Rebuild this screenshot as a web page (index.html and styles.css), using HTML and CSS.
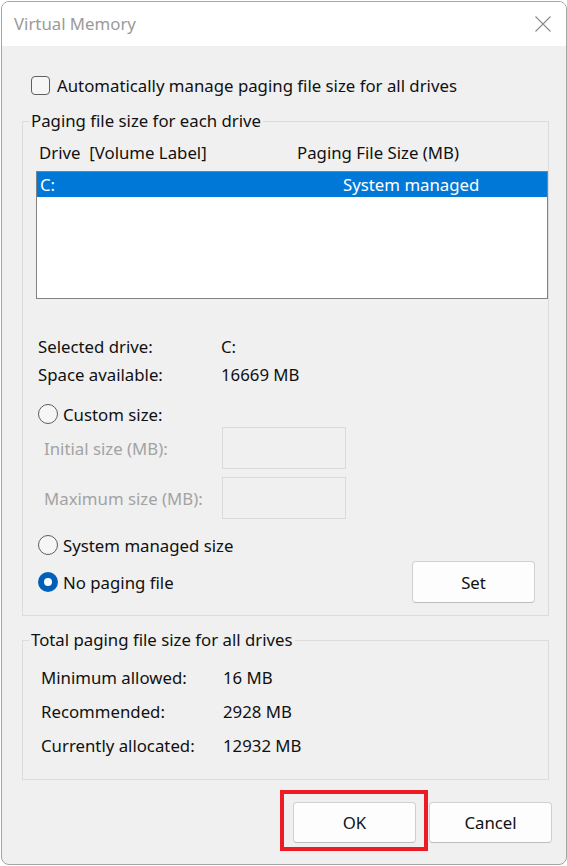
FILE: index.html
```html
<!DOCTYPE html>
<html lang="en">
<head>
    <meta charset="UTF-8">
    <meta name="viewport" content="width=device-width, initial-scale=1.0">
    <title>Virtual Memory</title>
    <link rel="stylesheet" href="styles.css">
</head>
<body>
    <div class="window">
        <div class="titlebar">
            <span class="title">Virtual Memory</span>
            <svg class="close" width="16" height="16" viewBox="0 0 16 16">
                <path d="M0.5 0.5 L15.5 15.5 M15.5 0.5 L0.5 15.5" stroke="#8a8a8a" stroke-width="1.1" fill="none"/>
            </svg>
        </div>

        <div class="content">
            <label class="check-row">
                <span class="checkbox"></span>
                <span>Automatically manage paging file size for all drives</span>
            </label>

            <fieldset class="group drives">
                <legend>Paging file size for each drive</legend>

                <div class="list-header">
                    <span class="pre">Drive  [Volume Label]</span>
                    <span>Paging File Size (MB)</span>
                </div>
                <div class="listbox">
                    <div class="list-row selected">
                        <span>C:</span>
                        <span>System managed</span>
                    </div>
                </div>

                <div class="info-row first">
                    <span>Selected drive:</span>
                    <span>C:</span>
                </div>
                <div class="info-row">
                    <span>Space available:</span>
                    <span>16669 MB</span>
                </div>

                <label class="radio-row custom">
                    <span class="radio"></span>
                    <span>Custom size:</span>
                </label>
                <div class="size-row first">
                    <span>Initial size (MB):</span>
                    <span class="textbox"></span>
                </div>
                <div class="size-row">
                    <span>Maximum size (MB):</span>
                    <span class="textbox"></span>
                </div>

                <label class="radio-row managed">
                    <span class="radio"></span>
                    <span>System managed size</span>
                </label>
                <div class="radio-row nopaging">
                    <label class="radio-label">
                        <span class="radio checked"></span>
                        <span>No paging file</span>
                    </label>
                    <button class="btn set">Set</button>
                </div>
            </fieldset>

            <fieldset class="group totals">
                <legend>Total paging file size for all drives</legend>
                <div class="total-row">
                    <span>Minimum allowed:</span>
                    <span>16 MB</span>
                </div>
                <div class="total-row">
                    <span>Recommended:</span>
                    <span>2928 MB</span>
                </div>
                <div class="total-row">
                    <span>Currently allocated:</span>
                    <span>12932 MB</span>
                </div>
            </fieldset>

            <div class="buttons">
                <span class="highlight"><button class="btn">OK</button></span>
                <button class="btn cancel">Cancel</button>
            </div>
        </div>
    </div>
</body>
</html>
```

FILE: styles.css
```css
body {
    margin: 0;
    background-color: #ffffff;
    font-family: "Noto Sans", "Open Sans", sans-serif;
    font-size: 16.8px;
    color: #111;
}
.window {
    box-sizing: border-box;
    margin: 1px;
    width: 566px;
    height: 864px;
    border: 1px solid #a5a5a5;
    border-radius: 8px;
    overflow: hidden;
    background-color: #f0f0f0;
    display: flex;
    flex-direction: column;
}
.titlebar {
    height: 44px;
    flex-shrink: 0;
    background-color: #ffffff;
    display: flex;
    align-items: center;
    justify-content: space-between;
    padding: 0 15px 0 12px;
}
.title {
    color: #9a9a9a;
    line-height: 24px;
}
.close {
    margin-top: -1px;
}
.content {
    padding: 0 14px 0 20px;
}
.check-row {
    display: flex;
    align-items: center;
    height: 24px;
    margin: 27px 0 0 9px;
}
.checkbox {
    box-sizing: border-box;
    width: 19px;
    height: 19px;
    border: 1px solid #606060;
    border-radius: 4px;
    background-color: #f6f6f6;
    margin-right: 7px;
}
.group {
    margin: 12px 3px 0 0;
    padding: 0;
    min-width: 0;
    border: 1px solid #dcdcdc;
}
.group legend {
    margin-left: 6px;
    padding: 0 2px;
    line-height: 24px;
}
.drives {
    padding-bottom: 12px;
}
.list-header {
    display: grid;
    grid-template-columns: 258px auto;
    line-height: 24px;
    margin-top: 8px;
    padding-left: 16px;
}
.pre {
    white-space: pre;
}
.listbox {
    box-sizing: border-box;
    height: 128px;
    margin: 6px 0 0 13px;
    border: 1px solid #828282;
    background-color: #ffffff;
}
.list-row {
    display: grid;
    grid-template-columns: 303px auto;
    height: 25px;
    line-height: 25px;
    padding-left: 3px;
}
.list-row.selected {
    background-color: #0078d7;
    color: #ffffff;
}
.info-row {
    display: grid;
    grid-template-columns: 183px auto;
    line-height: 24px;
    margin-top: 4px;
    padding-left: 15px;
}
.info-row.first {
    margin-top: 36px;
}
.radio-row {
    display: flex;
    align-items: center;
    height: 24px;
    padding-left: 15px;
}
.radio-row.custom {
    margin-top: 15px;
}
.radio-row.managed {
    margin-top: 14px;
}
.radio-row.nopaging {
    height: 42px;
    margin-top: 4px;
    justify-content: space-between;
    padding-right: 13px;
}
.radio-label {
    display: flex;
    align-items: center;
}
.radio {
    box-sizing: border-box;
    width: 20px;
    height: 20px;
    border: 1px solid #5e5e5e;
    border-radius: 50%;
    background-color: #f6f6f6;
    margin-right: 5px;
}
.radio.checked {
    border: 6px solid #005fb8;
    background-color: #ffffff;
}
.size-row {
    display: grid;
    grid-template-columns: 178px 124px;
    align-items: center;
    height: 42px;
    margin-top: 8px;
    padding-left: 21px;
    color: #a3a3a3;
}
.size-row.first {
    margin-top: 1px;
}
.textbox {
    box-sizing: border-box;
    height: 42px;
    border: 1px solid #dadada;
    background-color: #f0f0f0;
}
.btn {
    box-sizing: border-box;
    width: 123px;
    height: 41px;
    border: 1px solid #d0d0d0;
    border-bottom-color: #bdbdbd;
    border-radius: 4px;
    background-color: #fdfdfd;
    font-family: inherit;
    font-size: 16.8px;
    color: #111;
    padding: 0;
}
.btn.set {
    height: 42px;
}
.totals {
    padding-bottom: 21px;
}
.total-row {
    display: grid;
    grid-template-columns: 182px auto;
    line-height: 24px;
    margin-top: 10px;
    padding-left: 18px;
}
.total-row:first-of-type {
    margin-top: 14px;
}
.buttons {
    display: flex;
    justify-content: flex-end;
    align-items: flex-start;
    margin-top: 10px;
}
.highlight {
    display: block;
    border: 4px solid #ed1c24;
    padding: 8px 8px 4px 9px;
    margin-right: 1px;
}
.highlight .btn {
    display: block;
}
.cancel {
    margin-top: 12px;
}
```
